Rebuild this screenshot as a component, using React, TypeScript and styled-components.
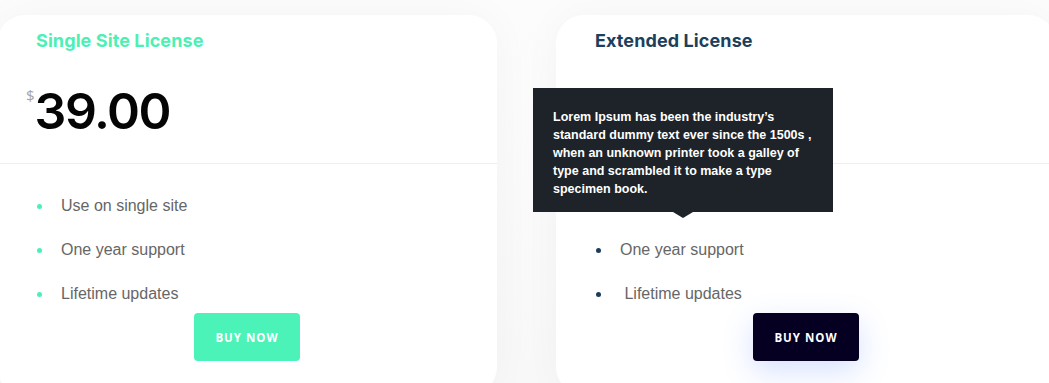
import React from 'react';
import styled, { createGlobalStyle } from 'styled-components';

const GlobalStyle = createGlobalStyle`
  html, body {
    margin: 0;
    padding: 0;
    background: #ffffff;
    overflow: hidden;
  }
  * {
    box-sizing: border-box;
  }
`;

type Plan = {
  title: string;
  price: string;
  features: string[];
  accent: string;
  bullet: string;
  button: string;
  glow?: boolean;
  tooltip?: string;
};

const plans: Plan[] = [
  {
    title: 'Single Site License',
    price: '39.00',
    features: ['Use on single site', 'One year support', 'Lifetime updates'],
    accent: '#4cf0b3',
    bullet: '#4cf0b3',
    button: '#4cf3b8',
  },
  {
    title: 'Extended License',
    price: '99.00',
    features: [
      'Use on unlimited websites',
      'One year support',
      '\u00a0Lifetime updates',
    ],
    accent: '#1c3f5d',
    bullet: '#1c3d5a',
    button: '#050022',
    glow: true,
    tooltip:
      'Lorem Ipsum has been the industry’s standard dummy text ever since the 1500s , when an unknown printer took a galley of type and scrambled it to make a type specimen book.',
  },
];

export default function App(): JSX.Element {
  return (
    <>
      <GlobalStyle />
      <Page>
        <Pricing>
          {plans.map(plan => (
            <Card key={plan.title}>
              <Header>
                <Title $color={plan.accent}>{plan.title}</Title>
                <Price>
                  <Currency>$</Currency>
                  <Amount>{plan.price}</Amount>
                </Price>
              </Header>
              <Features>
                {plan.features.map(f => (
                  <Feature key={f}>
                    <Dot $color={plan.bullet} />
                    {f}
                  </Feature>
                ))}
              </Features>
              <Footer>
                <BuyButton $bg={plan.button} $glow={plan.glow}>
                  BUY NOW
                </BuyButton>
              </Footer>
              {plan.tooltip && <Tooltip>{plan.tooltip}</Tooltip>}
            </Card>
          ))}
        </Pricing>
      </Page>
    </>
  );
}

const Page = styled.div`
  width: 1049px;
  height: 383px;
  overflow: hidden;
  background: linear-gradient(180deg, #fcfcfc 0%, #f8f8f8 100%);
`;

const Pricing = styled.div`
  display: grid;
  grid-template-columns: 500px 500px;
  column-gap: 59px;
  padding-top: 15px;
  margin-left: -3px;
`;

const Card = styled.div`
  position: relative;
  background: #ffffff;
  border-radius: 28px;
  box-shadow: 0 0 40px rgba(0, 0, 0, 0.035);
  display: flex;
  flex-direction: column;
  height: 380px;
`;

const Header = styled.div`
  padding: 13px 39px 0;
  height: 149px;
  border-bottom: 1px solid #eeeeee;
`;

const Title = styled.h3<{ $color: string }>`
  margin: 0;
  font-family: Inter, 'Open Sans', sans-serif;
  font-weight: 700;
  font-size: 18px;
  line-height: 26px;
  letter-spacing: 0.1px;
  color: ${p => p.$color};
`;

const Price = styled.div`
  display: flex;
  align-items: flex-start;
  margin-top: 34px;
  margin-left: -10px;
`;

const Currency = styled.span`
  font-family: 'Open Sans', sans-serif;
  font-size: 15px;
  line-height: 16px;
  color: #a7a29c;
  margin-top: -1px;
`;

const Amount = styled.span`
  font-family: Inter, sans-serif;
  font-weight: 600;
  font-size: 50px;
  line-height: 46px;
  letter-spacing: -1.5px;
  color: #050505;
`;

const Features = styled.ul`
  list-style: none;
  margin: 0;
  padding: 30px 40px 0;
  display: flex;
  flex-direction: column;
  gap: 20px;
`;

const Feature = styled.li`
  display: flex;
  align-items: center;
  font-family: 'Liberation Sans', Arial, sans-serif;
  font-size: 16px;
  line-height: 24px;
  color: #666666;
`;

const Dot = styled.span<{ $color: string }>`
  width: 5px;
  height: 5px;
  border-radius: 50%;
  background: ${p => p.$color};
  margin: 1px 19px 0 0;
  flex-shrink: 0;
`;

const Footer = styled.div`
  display: flex;
  justify-content: center;
  margin-top: 7px;
`;

const BuyButton = styled.button<{ $bg: string; $glow?: boolean }>`
  width: 106px;
  height: 48px;
  border: none;
  border-radius: 4px;
  background: ${p => p.$bg};
  color: #ffffff;
  font-family: 'Open Sans', sans-serif;
  font-weight: 700;
  font-size: 11.5px;
  letter-spacing: 1px;
  box-shadow: ${p =>
    p.$glow ? '0 10px 30px rgba(70, 120, 255, 0.22)' : 'none'};
`;

const Tooltip = styled.div`
  position: absolute;
  left: -23px;
  top: 73px;
  width: 300px;
  padding: 20px 20px 14px;
  background: #1e2329;
  color: #ffffff;
  font-family: 'Liberation Sans', Arial, sans-serif;
  font-weight: 700;
  font-size: 12.5px;
  line-height: 18px;
  z-index: 2;

  &::after {
    content: '';
    position: absolute;
    left: 50%;
    bottom: -6px;
    margin-left: -10px;
    border-left: 10px solid transparent;
    border-right: 10px solid transparent;
    border-top: 6px solid #1e2329;
  }
`;
